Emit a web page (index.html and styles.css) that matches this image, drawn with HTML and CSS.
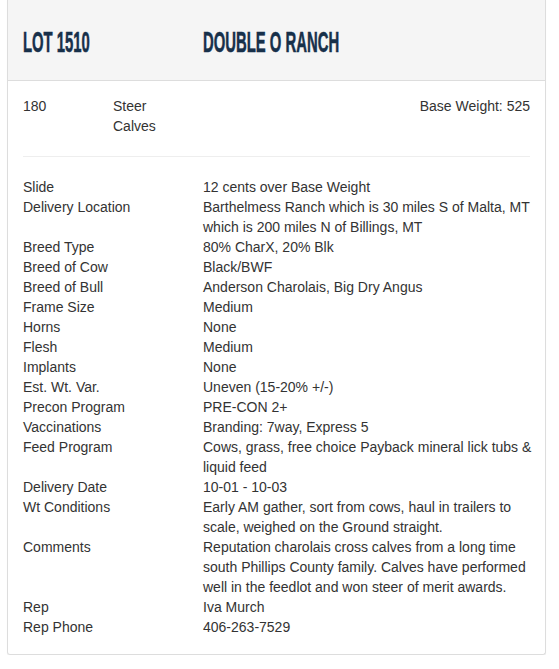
FILE: index.html
```html
<!DOCTYPE html>
<html>
<head>
<meta charset="utf-8">
<link rel="stylesheet" href="styles.css">
</head>
<body>
<div class="card">
  <div class="card-header">
    <h2 class="lot"><span>LOT 1510</span></h2>
    <h2 class="ranch"><span>DOUBLE O RANCH</span></h2>
  </div>
  <div class="card-body">
    <div class="summary">
      <div class="head">180</div>
      <div class="kind">Steer Calves</div>
      <div class="base">Base Weight: 525</div>
    </div>
    <hr class="sep">
    <div class="details">
      <div class="label">Slide</div><div class="value">12 cents over Base Weight</div>
      <div class="label">Delivery Location</div><div class="value">Barthelmess Ranch which is 30 miles S of Malta, MT which is 200 miles N of Billings, MT</div>
      <div class="label">Breed Type</div><div class="value">80% CharX, 20% Blk</div>
      <div class="label">Breed of Cow</div><div class="value">Black/BWF</div>
      <div class="label">Breed of Bull</div><div class="value">Anderson Charolais, Big Dry Angus</div>
      <div class="label">Frame Size</div><div class="value">Medium</div>
      <div class="label">Horns</div><div class="value">None</div>
      <div class="label">Flesh</div><div class="value">Medium</div>
      <div class="label">Implants</div><div class="value">None</div>
      <div class="label">Est. Wt. Var.</div><div class="value">Uneven (15-20% +/-)</div>
      <div class="label">Precon Program</div><div class="value">PRE-CON 2+</div>
      <div class="label">Vaccinations</div><div class="value">Branding: 7way, Express 5</div>
      <div class="label">Feed Program</div><div class="value">Cows, grass, free choice Payback mineral lick tubs &amp; liquid feed</div>
      <div class="label">Delivery Date</div><div class="value">10-01 - 10-03</div>
      <div class="label">Wt Conditions</div><div class="value">Early AM gather, sort from cows, haul in trailers to scale, weighed on the Ground straight.</div>
      <div class="label">Comments</div><div class="value">Reputation charolais cross calves from a long time south Phillips County family. Calves have performed well in the feedlot and won steer of merit awards.</div>
      <div class="label">Rep</div><div class="value">Iva Murch</div>
      <div class="label">Rep Phone</div><div class="value">406-263-7529</div>
    </div>
  </div>
</div>
</body>
</html>
```

FILE: styles.css
```css
html, body {
  margin: 0;
  padding: 0;
  background: #ffffff;
}
body {
  font-family: "Liberation Sans", Arial, sans-serif;
  font-size: 14px;
  line-height: 20px;
  color: #333333;
  padding: 0 12px 0 7px;
}
.card {
  width: 537px;
  border: 1px solid #dddddd;
  border-top: none;
  border-radius: 0 0 3px 3px;
  box-shadow: 0 1px 1px rgba(0,0,0,0.05);
}
.card-header {
  background: #f5f5f5;
  border-bottom: 1px solid #dddddd;
  height: 77px;
  padding: 3px 15px 0 15px;
  display: flex;
  align-items: center;
}
.card-header h2 {
  margin: 0;
  font-family: "Liberation Sans", sans-serif;
  font-weight: bold;
  font-size: 30px;
  line-height: 30px;
  color: #17304a;
  white-space: nowrap;
  -webkit-text-stroke: 0.6px #17304a;
}
.card-header h2 span {
  display: inline-block;
  transform: scaleX(0.495);
  transform-origin: left center;
}
.lot {
  width: 180px;
  flex: none;
}
.card-body {
  padding: 15px 15px 17px 15px;
}
.summary {
  display: flex;
  align-items: flex-start;
}
.head {
  width: 90px;
}
.kind {
  width: 60px;
}
.base {
  margin-left: auto;
}
.sep {
  border: 0;
  border-top: 1px solid #eeeeee;
  margin: 20px 0 20px 0;
}
.details {
  display: grid;
  grid-template-columns: 180px 1fr;
  margin-right: -4px;
}
```
